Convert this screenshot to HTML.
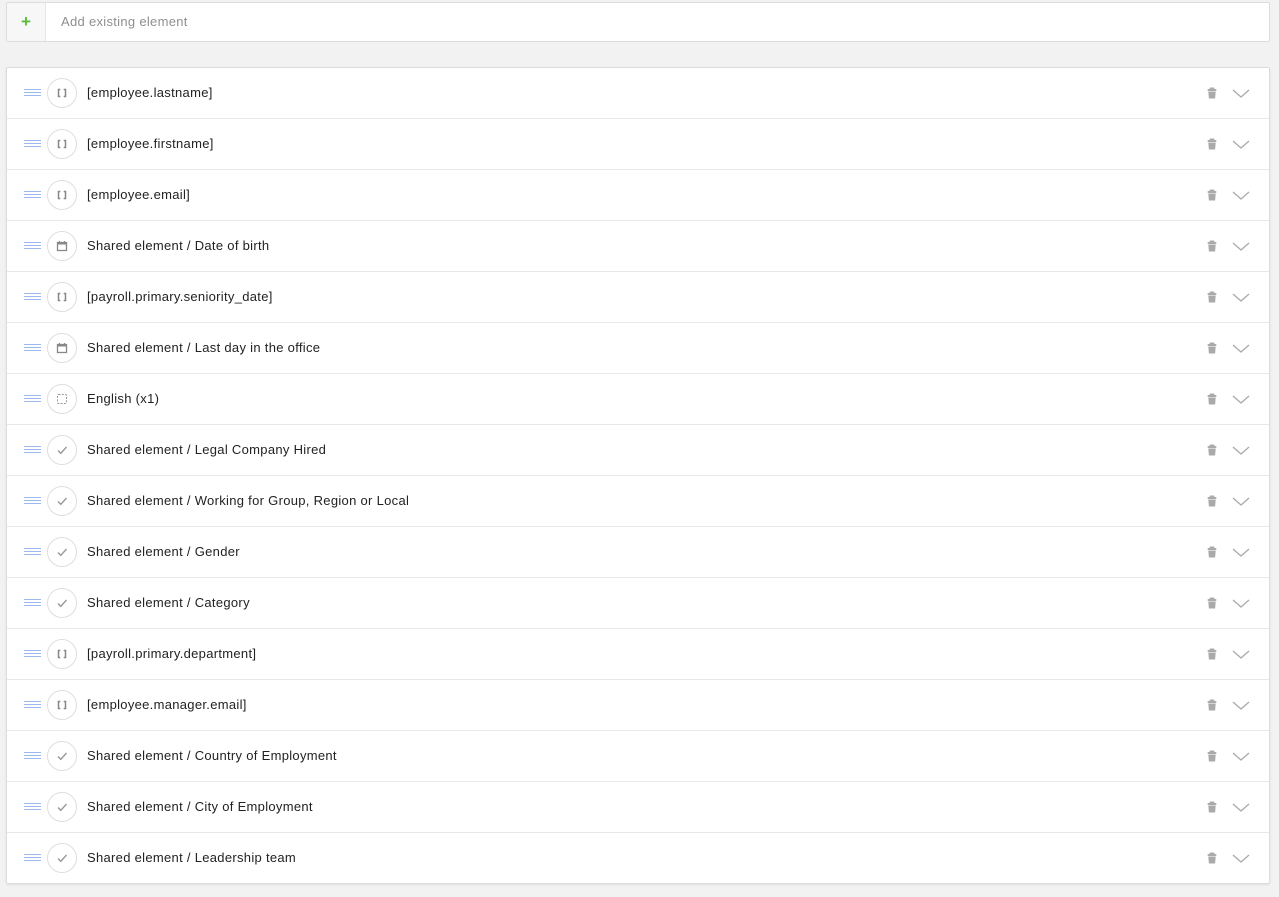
<!DOCTYPE html>
<html><head><meta charset="utf-8"><style>
*{box-sizing:border-box;margin:0;padding:0}
body{width:1279px;height:897px;background:#f2f2f2;font-family:"Liberation Sans",sans-serif;overflow:hidden;position:relative}
.top{position:absolute;left:6px;top:2px;width:1264px;height:40px;background:#fff;border:1px solid #dcdcdc;border-radius:2px;display:flex}
.plus{width:39px;border-right:1px solid #e6e6e6;background:#f7f7f7;color:#5bbb3a;font-size:17px;display:flex;align-items:center;justify-content:center;font-weight:bold}
.ph{padding-left:15px;line-height:38px;font-size:13px;color:#8f8f8f;letter-spacing:0.3px}
.list{position:absolute;left:6px;top:67px;width:1264px;height:817px;background:#fff;border:1px solid #dcdcdc;border-radius:2px;box-shadow:0 1px 2px rgba(0,0,0,.08)}
.row{height:51px;border-bottom:1px solid #e8e8e8;position:relative}
.row:last-child{border-bottom:none}
.drag{position:absolute;left:17px;top:21px;width:17px;height:7px;border-top:1px solid #9db8ee;border-bottom:1px solid #9db8ee}
.drag:after{content:"";position:absolute;left:0;right:0;top:2px;border-top:1px solid #9db8ee}
.c{position:absolute;left:40px;top:10px;width:30px;height:30px;border:1px solid #dedede;border-radius:50%}
.c svg{position:absolute;left:7px;top:7px}
.t{position:absolute;left:80px;top:0;line-height:50px;font-size:13px;color:#222;letter-spacing:0.3px}
.tr{position:absolute;left:1199px;top:18px}
.ch{position:absolute;left:1225px;top:19px}
</style></head><body>
<div class="top"><div class="plus">+</div><div class="ph">Add existing element</div></div>
<div class="list">
</div>
<script>
var B='<svg width="14" height="14" viewBox="0 0 14 14"><path d="M5.3 3.5H3.5v7h1.8M8.7 3.5h1.8v7H8.7" fill="none" stroke="#888" stroke-width="1.5"/></svg>';
var C='<svg width="14" height="14" viewBox="0 0 14 14"><rect x="2.5" y="3.5" width="9" height="8" fill="none" stroke="#888" stroke-width="1.3"/><rect x="2.5" y="3.5" width="9" height="2" fill="#888"/><path d="M4.5 2v2M9.5 2v2" stroke="#888" stroke-width="1.2"/></svg>';
var D='<svg width="14" height="14" viewBox="0 0 14 14"><rect x="2.5" y="2.5" width="9" height="9" rx="1" fill="none" stroke="#999" stroke-width="1" stroke-dasharray="2 1.3"/></svg>';
var K='<svg width="14" height="14" viewBox="0 0 14 14"><path d="M3 7.5l2.8 2.8L11.5 4" fill="none" stroke="#999" stroke-width="1.4"/></svg>';
var rows=[[B,'[employee.lastname]'],[B,'[employee.firstname]'],[B,'[employee.email]'],[C,'Shared element / Date of birth'],[B,'[payroll.primary.seniority_date]'],[C,'Shared element / Last day in the office'],[D,'English (x1)'],[K,'Shared element / Legal Company Hired'],[K,'Shared element / Working for Group, Region or Local'],[K,'Shared element / Gender'],[K,'Shared element / Category'],[B,'[payroll.primary.department]'],[B,'[employee.manager.email]'],[K,'Shared element / Country of Employment'],[K,'Shared element / City of Employment'],[K,'Shared element / Leadership team']];
var tr='<svg class="tr" width="12" height="14" viewBox="0 0 12 14"><rect x="3.5" y="1.5" width="5" height="2" rx="1" fill="#aaa"/><rect x="1.5" y="3" width="9" height="2" rx="1" fill="#aaa"/><path d="M2.3 5.5h7.4l-.6 7H2.9z" fill="#aaa"/></svg>';
var ch='<svg class="ch" width="18" height="12" viewBox="0 0 18 12"><path d="M1 3l8 7 8-7" fill="none" stroke="#aaa" stroke-width="1.3"/></svg>';
var h='';rows.forEach(function(r){h+='<div class="row"><div class="drag"></div><div class="c">'+r[0]+'</div><div class="t">'+r[1]+'</div>'+tr+ch+'</div>';});
document.querySelector('.list').innerHTML=h;
</script>
</body></html>
